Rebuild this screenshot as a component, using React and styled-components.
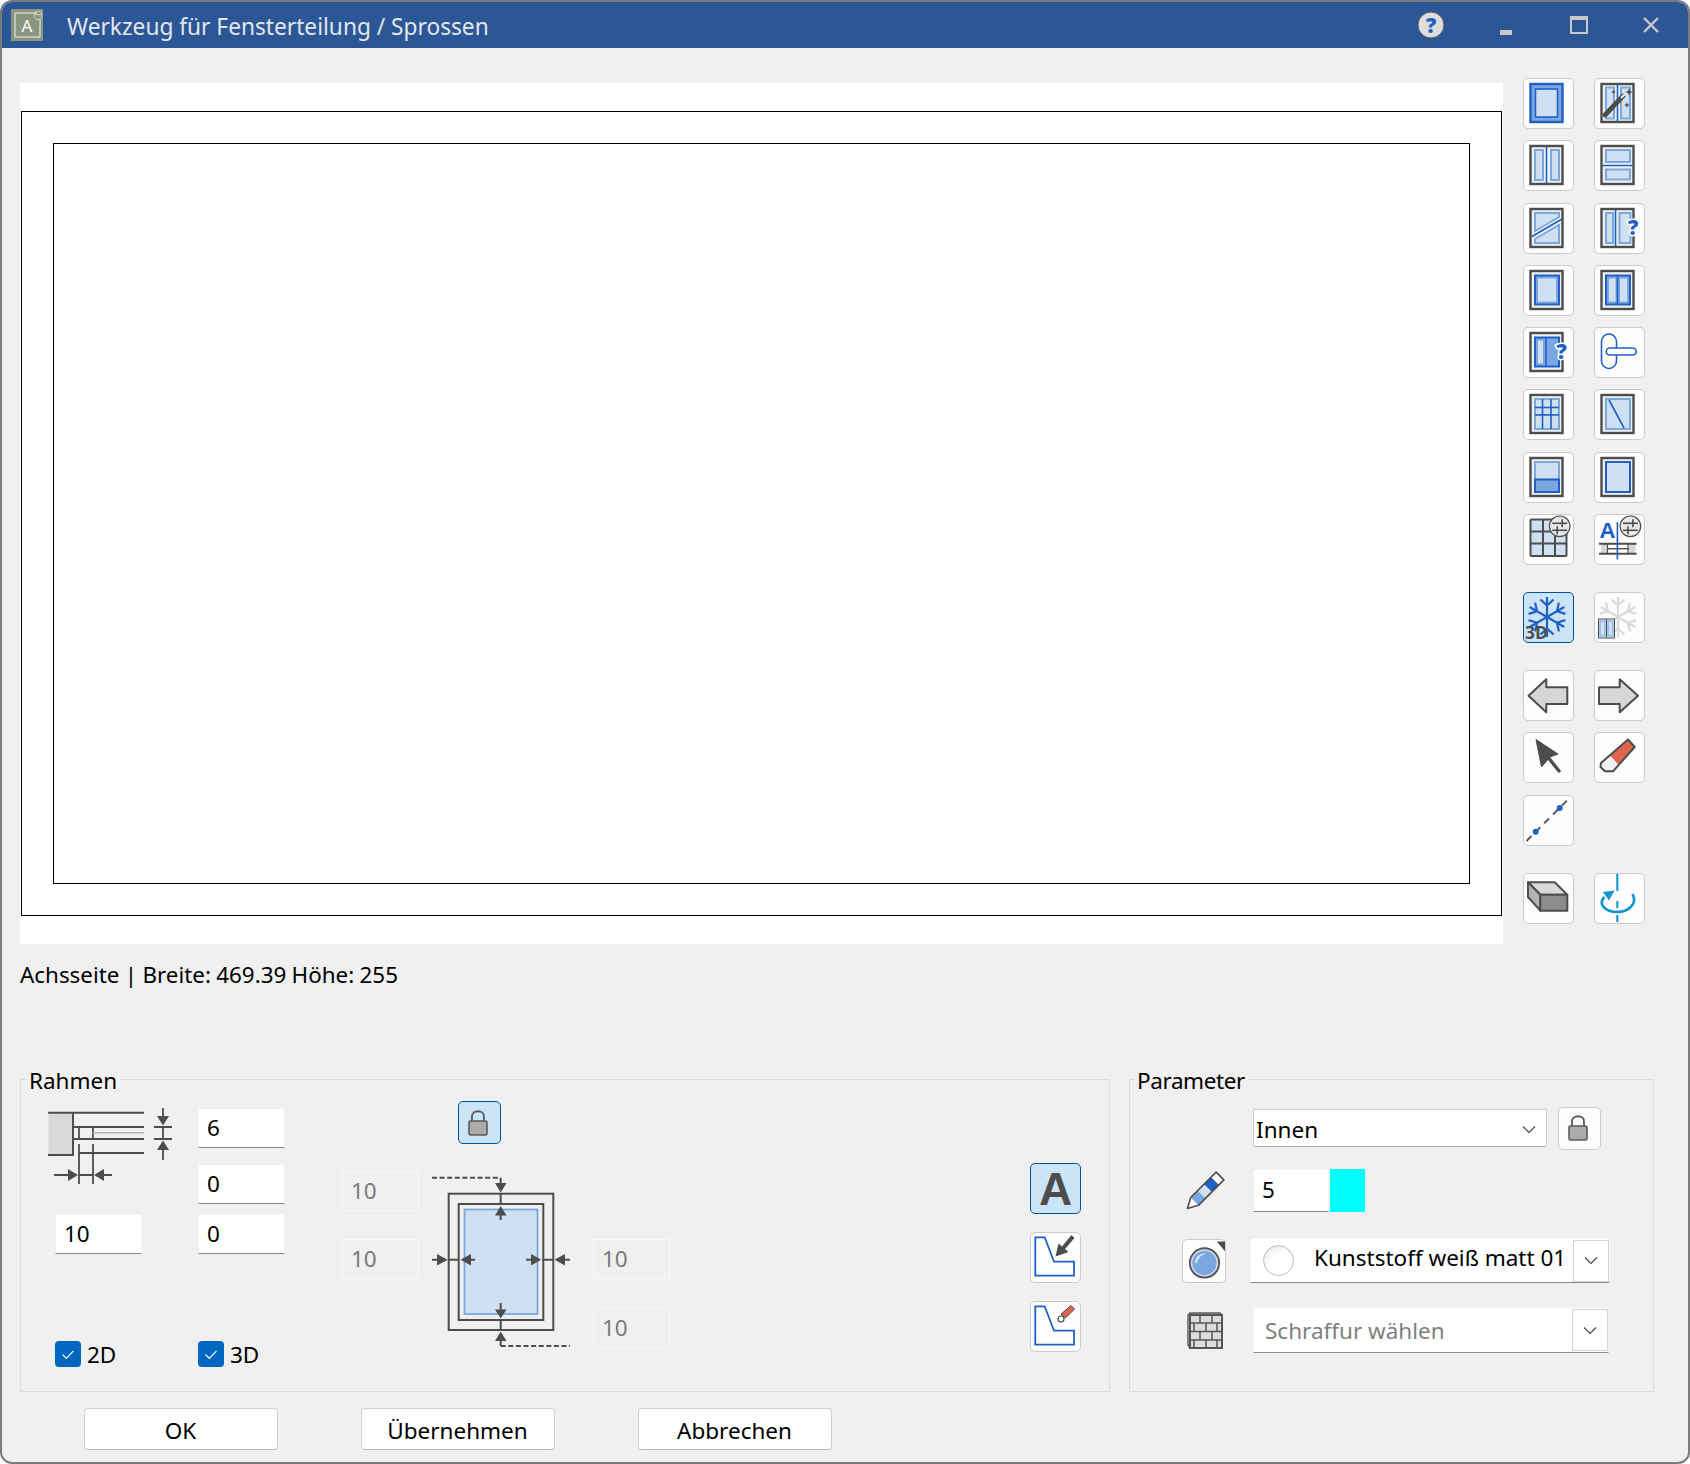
import React from "react";
import styled, { createGlobalStyle } from "styled-components";

const DARK = "#4d4d4d";
const BLUE = "#1f60c4";
const MID = "#7ba7e0";
const LIGHT = "#d0e0f3";
const PAGE = "#f0f0f0";
const FONT = `"Noto Sans", "Open Sans", "Liberation Sans", sans-serif`;

const Global = createGlobalStyle`
  html, body { margin: 0; padding: 0; background: #fff; }
  * { box-sizing: border-box; }
`;

const Window = styled.div`
  width: 1690px;
  height: 1464px;
  background: ${PAGE};
  border: 2px solid #7c7c7c;
  border-radius: 12px;
  overflow: hidden;
  font-family: ${FONT};
  color: #000;
  font-size: 22.5px;
`;

const TitleBar = styled.div`
  height: 46px;
  background: #2b5797;
  display: flex;
  align-items: center;
  padding: 0 29px 0 9px;
`;

const AppIcon = styled.div`
  width: 32px;
  height: 32px;
  background: #8b9680;
  flex: none;
  display: flex;
  align-items: center;
  justify-content: center;
`;

const Title = styled.div`
  margin-left: 24px;
  padding-top: 2px;
  color: #e3e6ea;
  font-size: 22.7px;
  flex: 1;
`;

const WinIcon = styled.svg`
  display: block;
  flex: none;
  margin-left: ${(p) => p.$ml || 0}px;
  margin-top: ${(p) => p.$mt || 0}px;
`;

const TopRow = styled.div`
  display: flex;
  padding: 30px 0 0 18px;
`;

const Preview = styled.div`
  width: 1483px;
  height: 861px;
  margin-top: 5px;
  background: #fff;
  padding: 28px 1px;
`;

const OuterRect = styled.div`
  height: 805px;
  border: 1px solid #000;
  padding: 31px;
`;

const InnerRect = styled.div`
  height: 100%;
  border: 1px solid #000;
`;

const Toolbar = styled.div`
  margin-left: 20px;
  display: flex;
  flex-direction: column;
  gap: 27px;
`;

const ToolGroup = styled.div`
  display: grid;
  grid-template-columns: 51px 51px;
  column-gap: 20px;
  row-gap: 11.3px;
`;

const ToolButton = styled.div`
  width: ${(p) => p.$size || 51}px;
  height: ${(p) => p.$size || 51}px;
  margin-left: ${(p) => p.$ml || 0}px;
  flex: none;
  border: 1px solid ${(p) => (p.$active ? "#005499" : "#cbcbcb")};
  border-radius: 5px;
  background: ${(p) => (p.$active ? "#cce4f7" : "#fdfdfd")};
  display: flex;
  align-items: center;
  justify-content: center;
  font-family: "Liberation Sans", sans-serif;
  font-weight: 700;
  font-size: 46px;
  color: ${DARK};
`;

const Status = styled.div`
  margin: 14px 0 0 18px;
  height: 34px;
  line-height: 34px;
  font-size: 22.4px;
  word-spacing: -0.5px;
`;

const GroupRow = styled.div`
  display: flex;
  gap: 19px;
  margin: 87px 0 0 18px;
`;

const GroupBox = styled.div`
  position: relative;
  width: ${(p) => p.$w}px;
  height: 313px;
  border: 1px solid #dcdcdc;
  display: ${(p) => (p.$column ? "block" : "flex")};
  align-items: flex-start;
  padding: ${(p) => p.$pad};
`;

const GroupLabel = styled.div`
  position: absolute;
  top: -16px;
  left: ${(p) => p.$left}px;
  padding: 0 3px;
  background: ${PAGE};
  line-height: 34px;
  letter-spacing: ${(p) => p.$ls || 0}px;
`;

const FrameCol = styled.div`
  width: 87px;
  margin-right: ${(p) => p.$mr || 0}px;
  margin-top: 7px;
  flex: none;
`;

const Field = styled.div`
  width: ${(p) => p.$w || 87}px;
  height: ${(p) => p.$h || 40}px;
  margin-top: ${(p) => p.$mt || 0}px;
  flex: none;
  padding: 0 0 2px 8px;
  display: flex;
  align-items: center;
  background: ${(p) => (p.$off ? PAGE : "#fff")};
  color: ${(p) => (p.$off ? "#7a7a7a" : "#000")};
  border: 1px solid ${(p) => (p.$off ? "#f9f9f9" : "#f2f2f2")};
  border-bottom: ${(p) => (p.$off ? "1px solid #f9f9f9" : "1.5px solid #8a8a8a")};
`;

const SectionIcon = styled.svg`
  display: block;
  margin-left: -8px;
  overflow: visible;
`;

const CheckRow = styled.div`
  display: flex;
  align-items: center;
  gap: 6px;
  margin-top: 87px;
  height: 26px;
  white-space: nowrap;
`;

const CheckBox = styled.div`
  width: 26px;
  height: 26px;
  flex: none;
  background: #0067c0;
  border-radius: 4px;
  display: flex;
  align-items: center;
  justify-content: center;
`;

const OffsetCol = styled.div`
  width: 77px;
  flex: none;
  margin-top: ${(p) => p.$top}px;
  margin-left: ${(p) => p.$ml || 0}px;
`;

const DiagramCol = styled.div`
  width: 138px;
  flex: none;
  margin-left: 13px;
`;

const LockSlot = styled.div`
  margin-left: 26px;
  margin-bottom: 32px;
`;

const SideCol = styled.div`
  display: flex;
  flex-direction: column;
  gap: 18px;
  margin: 62px 0 0 360px;
`;

const ParamRow = styled.div`
  display: flex;
  align-items: center;
  height: ${(p) => p.$h}px;
  margin-top: ${(p) => p.$mt || 0}px;
`;

const IconSlot = styled.div`
  width: 71px;
  flex: none;
  display: flex;
  padding-left: ${(p) => p.$pl || 0}px;
`;

const Select = styled.div`
  width: 294px;
  height: 38px;
  padding: 3px 10px 0 2px;
  background: #fff;
  border: 1px solid #cfcfcf;
  border-bottom: 1.5px solid #a8a8a8;
  border-radius: 2px;
  display: flex;
  align-items: center;
  justify-content: space-between;
`;

const Swatch = styled.div`
  width: 35px;
  height: 43px;
  margin-left: 1px;
  background: #00ffff;
`;

const Combo = styled.div`
  width: ${(p) => p.$w}px;
  height: ${(p) => p.$h}px;
  margin-left: ${(p) => p.$ml || 0}px;
  flex: none;
  display: flex;
  align-items: center;
  background: #fff;
  border: 1px solid #f4f4f4;
  border-bottom: 1.5px solid #8a8a8a;
  white-space: nowrap;
  padding-left: ${(p) => p.$pl || 0}px;
  color: ${(p) => (p.$muted ? "#7f7f7f" : "#000")};
`;

const ComboText = styled.span`
  margin-top: ${(p) => p.$mt || 0}px;
`;

const Sphere = styled.div`
  width: 31px;
  height: 31px;
  margin-right: 20px;
  flex: none;
  border-radius: 50%;
  border: 1px solid #bdbdbd;
  background: radial-gradient(circle at 60% 65%, #fff 45%, #f1f1f1 70%, #cfcfcf 100%);
`;

const DropButton = styled.div`
  width: 36px;
  height: 42px;
  margin-left: auto;
  flex: none;
  background: #fff;
  border: 1px solid #d4d4d4;
  display: flex;
  align-items: center;
  justify-content: center;
`;

const Footer = styled.div`
  display: flex;
  gap: 83px;
  margin: 16px 0 0 81.5px;
`;

const DialogButton = styled.div`
  width: 194px;
  height: 42px;
  padding-top: 2px;
  background: #fff;
  border: 1px solid #d0d0d0;
  border-bottom-color: #bcbcbc;
  border-radius: 4px;
  display: flex;
  align-items: center;
  justify-content: center;
`;

const Ic = ({ children }) => (
  <svg width="49" height="49" viewBox="1 1 49 49" style={{ display: "block" }}>
    {children}
  </svg>
);

const Frame = () => <rect x="7.5" y="6" width="32" height="38" fill={PAGE} stroke={DARK} strokeWidth="2.4" />;
const Pane = ({ x, y, w, h, stroke = MID, fill = LIGHT, sw = 2 }) => (
  <rect x={x} y={y} width={w} height={h} fill={fill} stroke={stroke} strokeWidth={sw} />
);
const Ln = ({ x1, y1, x2, y2, c = BLUE, w = 1.6, ...rest }) => (
  <line x1={x1} y1={y1} x2={x2} y2={y2} stroke={c} strokeWidth={w} {...rest} />
);
const Question = ({ x, y }) => (
  <text
    x={x}
    y={y}
    textAnchor="middle"
    fontFamily="'Open Sans', sans-serif"
    fontWeight="800"
    fontSize="21"
    fill={BLUE}
    stroke="#fff"
    strokeWidth="3"
    paintOrder="stroke"
  >
    ?
  </text>
);
const Sliders = ({ cx, cy }) => (
  <g>
    <circle cx={cx} cy={cy} r={10.3} fill="#e8e8e8" stroke={DARK} strokeWidth="1.2" />
    <Ln x1={cx - 7.5} y1={cy - 3} x2={cx + 7.5} y2={cy - 3} c={DARK} w="1.6" />
    <Ln x1={cx + 2.5} y1={cy - 7} x2={cx + 2.5} y2={cy + 1} c={DARK} w="1.6" />
    <Ln x1={cx - 7.5} y1={cy + 4} x2={cx + 7.5} y2={cy + 4} c={DARK} w="1.6" />
    <Ln x1={cx - 2.5} y1={cy} x2={cx - 2.5} y2={cy + 8} c={DARK} w="1.6" />
  </g>
);
const Flake = ({ c, w = 2.2 }) => (
  <g stroke={c} strokeWidth={w} fill="none">
    {[0, 60, 120, 180, 240, 300].map((a) => (
      <g key={a} transform={`rotate(${a} 24 25)`}>
        <path d="M24 25V5M17.5 7.5L24 13.5L30.5 7.5" />
      </g>
    ))}
  </g>
);
const Star = ({ x, y, r }) => (
  <path
    d={`M${x} ${y - r}L${x + r * 0.28} ${y - r * 0.28}L${x + r} ${y}L${x + r * 0.28} ${y + r * 0.28}L${x} ${y + r}L${x - r * 0.28} ${y + r * 0.28}L${x - r} ${y}L${x - r * 0.28} ${y - r * 0.28}Z`}
    fill={DARK}
  />
);

const tools = [
  <Ic key="a1">
    <rect x="7.5" y="6" width="32" height="38" fill={MID} stroke={BLUE} strokeWidth="2.4" />
    <rect x="12.5" y="11" width="22" height="28" fill={LIGHT} stroke={BLUE} strokeWidth="1.6" />
  </Ic>,
  <Ic key="a2">
    <Frame />
    <Pane x="12" y="9.5" w="8" h="31" />
    <Pane x="27" y="9.5" w="9" h="31" />
    <Ln x1="23.5" y1="6" x2="23.5" y2="44" />
    <Ln x1="11" y1="37" x2="29" y2="18" c={DARK} w="4.8" strokeLinecap="round" />
    <Ln x1="27" y1="20" x2="31" y2="16" c="#eee" w="2.2" />
    <Star x={35} y={14} r={3.8} />
    <Star x={33} y={27} r={3} />
    <Star x={19.5} y={14} r={2.4} />
  </Ic>,
  <Ic key="b1">
    <Frame />
    <Pane x="12" y="10" w="8" h="30" />
    <Pane x="28" y="10" w="8" h="30" />
    <Ln x1="23.5" y1="6" x2="23.5" y2="44" />
  </Ic>,
  <Ic key="b2">
    <Frame />
    <Pane x="12" y="10" w="24" h="12" />
    <Pane x="12" y="29.5" w="24" h="10" />
    <Ln x1="7.5" y1="25.5" x2="39.5" y2="25.5" />
  </Ic>,
  <Ic key="c1">
    <Frame />
    <path d="M12 10H36V14L12 28Z" fill={LIGHT} stroke={MID} strokeWidth="2" />
    <path d="M36 22V40H12V36Z" fill={LIGHT} stroke={MID} strokeWidth="2" />
    <Ln x1="9" y1="33.5" x2="39" y2="16" />
  </Ic>,
  <Ic key="c2">
    <Frame />
    <Pane x="12" y="10" w="7" h="30" />
    <Pane x="25.5" y="10" w="11" h="30" />
    <Ln x1="21.5" y1="6" x2="21.5" y2="44" />
    <Question x="39" y="32" />
  </Ic>,
  <Ic key="d1">
    <Frame />
    <Pane x="12" y="10.5" w="24" h="29" stroke={BLUE} fill={MID} />
    <Pane x="15" y="13.5" w="18" h="23" stroke={LIGHT} fill={LIGHT} sw="0" />
  </Ic>,
  <Ic key="d2">
    <Frame />
    <Pane x="12" y="10.5" w="24" h="29" stroke={BLUE} fill={MID} />
    <Pane x="15" y="13.5" w="6.5" h="23" stroke={LIGHT} fill={LIGHT} sw="0" />
    <Pane x="26" y="13.5" w="7" h="23" stroke={LIGHT} fill={LIGHT} sw="0" />
    <Ln x1="23.5" y1="10" x2="23.5" y2="40" />
  </Ic>,
  <Ic key="e1">
    <Frame />
    <Pane x="12" y="10.5" w="24" h="29" stroke={BLUE} fill={MID} />
    <Pane x="15" y="13.5" w="5" h="23" stroke={LIGHT} fill={LIGHT} sw="0" />
    <Ln x1="23" y1="10" x2="23" y2="40" />
    <Question x="38.5" y="32" />
  </Ic>,
  <Ic key="e2">
    <rect x="7.5" y="7" width="15" height="34.5" rx="7.5" fill="#fff" stroke={BLUE} strokeWidth="1.6" />
    <rect x="12.2" y="21" width="30" height="7" rx="3.5" fill="#fff" stroke={BLUE} strokeWidth="1.6" />
  </Ic>,
  <Ic key="f1">
    <Frame />
    <Pane x="12" y="10" w="24" h="30" />
    <Ln x1="19.5" y1="10" x2="19.5" y2="40" />
    <Ln x1="28" y1="10" x2="28" y2="40" />
    <Ln x1="12" y1="18.5" x2="36" y2="18.5" />
    <Ln x1="12" y1="26" x2="36" y2="26" />
  </Ic>,
  <Ic key="f2">
    <Frame />
    <Pane x="12" y="10" w="24" h="30" />
    <Ln x1="15" y1="11" x2="30" y2="39" />
  </Ic>,
  <Ic key="g1">
    <Frame />
    <Pane x="12" y="10" w="24" h="30" />
    <Pane x="12" y="27.5" w="24" h="12.5" stroke={BLUE} fill={MID} />
  </Ic>,
  <Ic key="g2">
    <Frame />
    <Pane x="12" y="10" w="24" h="30" stroke={BLUE} />
  </Ic>,
  <Ic key="h1">
    <rect x="7.5" y="5.5" width="36" height="36.5" rx="1" fill={LIGHT} stroke={DARK} strokeWidth="2" />
    <Ln x1="20" y1="5.5" x2="20" y2="42" c={DARK} w="2" />
    <Ln x1="32" y1="5.5" x2="32" y2="42" c={DARK} w="2" />
    <Ln x1="7.5" y1="17.5" x2="43.5" y2="17.5" c={DARK} w="2" />
    <Ln x1="7.5" y1="29.5" x2="43.5" y2="29.5" c={DARK} w="2" />
    <Sliders cx={36.7} cy={12.3} />
  </Ic>,
  <Ic key="h2">
    <text x="13.5" y="24" textAnchor="middle" fontFamily="'Liberation Sans', sans-serif" fontWeight="700" fontSize="22" fill={BLUE}>
      A
    </text>
    <rect x="7" y="30" width="6" height="10" fill="#d6d6d6" />
    <rect x="35" y="30" width="6.5" height="10" fill="#d6d6d6" />
    <Ln x1="5" y1="29.7" x2="42.5" y2="29.7" c={DARK} w="2" />
    <Ln x1="5" y1="39.7" x2="42.5" y2="39.7" c={DARK} w="2" />
    <Ln x1="13" y1="34.7" x2="35" y2="34.7" c={DARK} w="1.4" />
    <Ln x1="13.5" y1="30" x2="13.5" y2="39.5" c={DARK} w="1.2" />
    <Ln x1="34" y1="30" x2="34" y2="39.5" c={DARK} w="1.2" />
    <Ln x1="23.4" y1="8" x2="23.4" y2="45.5" />
    <Sliders cx={36.4} cy={12.3} />
  </Ic>,
];

const ColdIcons = [
  <ToolButton key="s1" $active>
    <Ic>
      <Flake c={BLUE} />
      <text x="2" y="47" fontFamily="'Open Sans', sans-serif" fontWeight="700" fontSize="17.5" fill={DARK}>
        3D
      </text>
    </Ic>
  </ToolButton>,
  <ToolButton key="s2">
    <Ic>
      <Flake c="#d9d9d9" />
      <rect x="4.5" y="27" width="16" height="19" fill="#eef3fa" stroke={DARK} strokeWidth="1" />
      <rect x="6" y="29" width="5" height="15" fill={LIGHT} stroke={MID} strokeWidth="1.2" />
      <rect x="14" y="29" width="5" height="15" fill={LIGHT} stroke={MID} strokeWidth="1.2" />
      <Ln x1="12.5" y1="27" x2="12.5" y2="46" c={DARK} w="1" />
    </Ic>
  </ToolButton>,
];

const EditIcons = [
  <ToolButton key="l">
    <Ic>
      <path d="M5.5 25.7L23.3 9.3V17.3H44.3V34H23.3V42.3Z" fill="#d6d6d6" stroke={DARK} strokeWidth="2" strokeLinejoin="round" />
    </Ic>
  </ToolButton>,
  <ToolButton key="r">
    <Ic>
      <path d="M44 25.7L25.7 9.3V17.3H5V34H25.7V42.3Z" fill="#d6d6d6" stroke={DARK} strokeWidth="2" strokeLinejoin="round" />
    </Ic>
  </ToolButton>,
  <ToolButton key="c">
    <Ic>
      <path d="M13 7.5L35 22L27 25L18.5 35Z" fill={DARK} stroke={DARK} strokeWidth="1" strokeLinejoin="round" />
      <Ln x1="24" y1="24" x2="36" y2="39" c={DARK} w="3.4" strokeLinecap="round" />
    </Ic>
  </ToolButton>,
  <ToolButton key="e">
    <Ic>
      <path d="M34 7.5L40.7 15L24.5 33L15.5 23Z" fill="#e0654f" />
      <path d="M15.5 23L24.5 33L19 39.3H11L6.5 35L7 31Z" fill="#f1f1f1" />
      <path d="M34 7.5L40.7 15L19 39.3H11L6.5 35L7 31Z" fill="none" stroke={DARK} strokeWidth="2" strokeLinejoin="round" />
    </Ic>
  </ToolButton>,
  <ToolButton key="d">
    <Ic>
      <Ln x1="3.5" y1="46" x2="46" y2="3.5" c="#5a5a5a" w="2" strokeDasharray="7 5.5" />
      <circle cx="36.7" cy="13" r="3" fill={BLUE} />
      <circle cx="12.7" cy="36.7" r="3" fill={BLUE} />
    </Ic>
  </ToolButton>,
  <span key="gap" />,
];

const ViewIcons = [
  <ToolButton key="v">
    <Ic>
      <path d="M5 9.3H31.7L44.3 21.7H17.3Z" fill="#d9d9d9" stroke={DARK} strokeWidth="2" strokeLinejoin="round" />
      <path d="M5 9.3L17.3 21.7V37.7L5 24Z" fill="#b3b3b3" stroke={DARK} strokeWidth="2" strokeLinejoin="round" />
      <rect x="17.3" y="21.7" width="27" height="16" fill="#8c8c8c" stroke={DARK} strokeWidth="2" strokeLinejoin="round" />
    </Ic>
  </ToolButton>,
  <ToolButton key="rot">
    <Ic>
      <path d="M23.3 1V18M23.3 28V35M23.3 42V49" stroke="#0f94d2" strokeWidth="2" fill="none" />
      <path d="M38.5 21C44 31 34 39 23.3 39C11 39 3.5 31 10.5 24" stroke="#0f94d2" strokeWidth="2.6" fill="none" />
      <path d="M9 19L20.5 17.5L15 27.5Z" fill="#0f94d2" />
    </Ic>
  </ToolButton>,
];

const LockIcon = () => (
  <svg width="26" height="30" viewBox="0 0 26 30" style={{ display: "block", marginRight: 3 }}>
    <path d="M7 13V8.5C7 1.5 19 1.5 19 8.5V13" fill="none" stroke="#5a5a5a" strokeWidth="1.8" />
    <rect x="4" y="13" width="18" height="14" rx="1.5" fill="#ababab" stroke="#5a5a5a" strokeWidth="1.6" />
  </svg>
);

const Chevron = () => (
  <svg width="14" height="9" viewBox="0 0 14 9" style={{ display: "block" }}>
    <path d="M1 1.5L7 7.5L13 1.5" fill="none" stroke="#444" strokeWidth="1.1" />
  </svg>
);

const CheckMark = () => (
  <svg width="14" height="11" viewBox="0 0 14 11" style={{ display: "block" }}>
    <path d="M1.5 5.5L5.3 9.3L12.5 1.8" fill="none" stroke="#fff" strokeWidth="1.2" />
  </svg>
);

const CornerShape = () => (
  <path d="M5.3 5.3H14.7L24 29.7H44V43.7H5.3Z" fill="#fff" stroke={BLUE} strokeWidth="1.8" />
);

const Arrow = ({ d }) => <path d={d} fill={DARK} />;

const SectionDrawing = () => (
  <SectionIcon width="125" height="76" viewBox="47 48 125 76">
    <rect x="48.5" y="52.7" width="24" height="42.3" fill="#d9d9d9" />
    <g stroke={DARK} strokeWidth="1.8" fill="none">
      <path d="M48 52.7H144M48 95H74M73 52.7V95" strokeWidth="2" />
      <path d="M73 67H144M73 79H144M79 93H144" />
      <path d="M79 67V79M79 84V124M93 67V79M93 84V124M82 93H90" />
      <path d="M54 115H70M79 115H93M102 115H112" />
      <path d="M163 48V56M154 67H172M154 79H172M163 67V79M163 89V100" />
    </g>
    <Ln x1="93" y1="72.7" x2="144" y2="72.7" c="#b3b3b3" w="1.6" />
    <Arrow d="M68 109L78 115L68 121Z" />
    <Arrow d="M104 109L94 115L104 121Z" />
    <Arrow d="M157 56H169L163 65.5Z" />
    <Arrow d="M157 90H169L163 80.5Z" />
  </SectionIcon>
);

const MarginDrawing = () => (
  <svg width="138" height="172" viewBox="112 86 138 172" style={{ display: "block" }}>
    <rect x="128.7" y="103.7" width="104.6" height="136.3" fill={PAGE} stroke={DARK} strokeWidth="2" />
    <rect x="138.7" y="114" width="84.6" height="116" fill={PAGE} stroke={DARK} strokeWidth="2" />
    <rect x="144.5" y="119.5" width="73" height="104.5" fill={LIGHT} stroke={MID} strokeWidth="1.8" />
    <g stroke={DARK} strokeWidth="2" fill="none">
      <path d="M112 87.7H180.7" strokeDasharray="5 2.6" />
      <path d="M180.7 88V95M180.7 103V114M180.7 124V130" />
      <path d="M112 169.7H120M128 169.7H139M148 169.7H155" />
      <path d="M206 169.7H213M222 169.7H233M243 169.7H250" />
      <path d="M180.7 213V221M180.7 230V241M180.7 250V256" />
      <path d="M180.7 256H250" strokeDasharray="5 2.6" />
    </g>
    <Arrow d="M175 93H186.5L180.7 102.5Z" />
    <Arrow d="M175 125.5H186.5L180.7 116Z" />
    <Arrow d="M175 219.5H186.5L180.7 228.5Z" />
    <Arrow d="M175 251H186.5L180.7 241.5Z" />
    <Arrow d="M117 164V175.5L127.7 169.7Z" />
    <Arrow d="M151 164V175.5L140.5 169.7Z" />
    <Arrow d="M211 164V175.5L221.3 169.7Z" />
    <Arrow d="M245 164V175.5L234.5 169.7Z" />
  </svg>
);

const PencilIcon = () => (
  <svg width="39" height="39" viewBox="0 0 39 39" style={{ display: "block" }}>
    <g transform="translate(1.5 37.5) rotate(45)">
      <path d="M0 0L-5 -10H5Z" fill="#fff" />
      <rect x="-5.5" y="-20" width="11" height="10" fill={MID} />
      <rect x="-5.5" y="-29" width="11" height="9" fill={LIGHT} />
      <rect x="-5.5" y="-39" width="11" height="10" fill={BLUE} />
      <rect x="-5.5" y="-46" width="11" height="7" fill="#fff" />
      <path d="M0 0L-5.5 -10V-46H5.5V-10Z" fill="none" stroke={DARK} strokeWidth="1.6" strokeLinejoin="round" />
    </g>
  </svg>
);

const HatchIcon = () => (
  <svg width="36" height="37" viewBox="0 0 36 37" style={{ display: "block" }}>
    <rect x="3" y="3" width="32" height="33" fill="#dcdcdc" stroke="#555" strokeWidth="2" />
    <path d="M1 3L3 1H33L35 3M1 3V33L3 36" fill="none" stroke="#555" strokeWidth="1.4" />
    <path
      d="M3 11H35M3 19.5H35M3 28H35M13 3V11M25 3V11M7 11V19.5M19 11V19.5M30 11V19.5M13 19.5V28M25 19.5V28M7 28V36M19 28V36M30 28V36"
      fill="none"
      stroke="#555"
      strokeWidth="1.5"
    />
  </svg>
);

const MaterialIcon = () => (
  <svg width="43" height="43" viewBox="1 1 43 43" style={{ display: "block" }}>
    <circle cx="23" cy="25" r="15" fill={LIGHT} stroke="#555" strokeWidth="2" />
    <circle cx="23" cy="25" r="12.5" fill={MID} />
    <path d="M13.5 25C13.5 18 19 14.5 25 15C20 16.5 16 20 15.5 25Z" fill="#fff" opacity="0.7" />
    <path d="M35.5 3H44V13Z" fill={DARK} />
  </svg>
);

export default function App() {
  return (
    <>
      <Global />
      <Window>
        <TitleBar>
          <AppIcon>
            <svg width="32" height="32" viewBox="0 0 32 32" style={{ display: "block" }}>
              <path d="M26 4H4V28H29V10" fill="none" stroke="#f2f2f2" strokeWidth="1" />
              <text x="16" y="23" textAnchor="middle" fontFamily="'Noto Sans', sans-serif" fontSize="17" fill="#fff">
                A
              </text>
              <ellipse cx="27" cy="4" rx="3.5" ry="1.8" fill="none" stroke="#d8dcd2" strokeWidth="0.8" />
              <path d="M23.5 4V8.5C23.5 11 30.5 11 30.5 8.5V4" fill="none" stroke="#d8dcd2" strokeWidth="0.8" />
            </svg>
          </AppIcon>
          <Title>Werkzeug für Fensterteilung / Sprossen</Title>
          <WinIcon width="28" height="28" viewBox="0 0 28 28">
            <circle cx="14" cy="14" r="13" fill="#dedede" stroke="#5a5a5a" strokeWidth="1" />
            <text x="14" y="21.5" textAnchor="middle" fontFamily="'Open Sans', sans-serif" fontWeight="800" fontSize="21" fill={BLUE}>
              ?
            </text>
          </WinIcon>
          <WinIcon $ml={55} $mt={15} width="12" height="12" viewBox="0 0 12 12">
            <rect x="0" y="3" width="12" height="5" fill="#c9c9c9" />
          </WinIcon>
          <WinIcon $ml={58} width="18" height="18" viewBox="0 0 18 18">
            <path d="M1 1H17V17H1Z" fill="none" stroke="#c9c9c9" strokeWidth="2" />
            <rect x="1" y="1" width="16" height="3" fill="#c9c9c9" />
          </WinIcon>
          <WinIcon $ml={55} width="16" height="16" viewBox="0 0 16 16">
            <path d="M1 1L15 15M15 1L1 15" stroke="#c9c9c9" strokeWidth="2.4" />
          </WinIcon>
        </TitleBar>

        <TopRow>
          <Preview>
            <OuterRect>
              <InnerRect />
            </OuterRect>
          </Preview>
          <Toolbar>
            <ToolGroup>
              {tools.map((icon) => (
                <ToolButton key={icon.key}>{icon}</ToolButton>
              ))}
            </ToolGroup>
            <ToolGroup>{ColdIcons}</ToolGroup>
            <ToolGroup>{EditIcons}</ToolGroup>
            <ToolGroup>{ViewIcons}</ToolGroup>
          </Toolbar>
        </TopRow>

        <Status>Achsseite | Breite: 469.39 Höhe: 255</Status>

        <GroupRow>
          <GroupBox $w={1090} $pad="21px 0 0 34px">
            <GroupLabel $left={5}>Rahmen</GroupLabel>
            <FrameCol $mr={56}>
              <SectionDrawing />
              <Field $mt={30}>10</Field>
              <CheckRow>
                <CheckBox>
                  <CheckMark />
                </CheckBox>
                2D
              </CheckRow>
            </FrameCol>
            <FrameCol>
              <Field>6</Field>
              <Field $mt={16}>0</Field>
              <Field $mt={10}>0</Field>
              <CheckRow>
                <CheckBox>
                  <CheckMark />
                </CheckBox>
                3D
              </CheckRow>
            </FrameCol>
            <OffsetCol $top={70} $ml={57}>
              <Field $w={77} $off>
                10
              </Field>
              <Field $w={77} $mt={28} $off>
                10
              </Field>
            </OffsetCol>
            <DiagramCol>
              <LockSlot>
                <ToolButton $size={43} $active>
                  <LockIcon />
                </ToolButton>
              </LockSlot>
              <MarginDrawing />
            </DiagramCol>
            <OffsetCol $top={138} $ml={23}>
              <Field $w={77} $off>
                10
              </Field>
              <Field $w={77} $mt={29} $off>
                10
              </Field>
            </OffsetCol>
            <SideCol>
              <ToolButton $active>A</ToolButton>
              <ToolButton>
                <Ic>
                  <CornerShape />
                  <path d="M41.5 3L44.5 6L35 17L38.5 20L25.5 24.5L28.5 11.5L32 14.5Z" fill={DARK} />
                </Ic>
              </ToolButton>
              <ToolButton>
                <Ic>
                  <CornerShape />
                  <path d="M41 4.5L44.5 8L35.5 17L31 13Z" fill="#e0654f" stroke={DARK} strokeWidth="1" />
                  <circle cx="31" cy="18" r="3" fill="#fff" stroke={DARK} strokeWidth="1.2" />
                </Ic>
              </ToolButton>
            </SideCol>
          </GroupBox>

          <GroupBox $w={525} $column $pad="27px 0 0 52px">
            <GroupLabel $left={4} $ls={-0.4}>
              Parameter
            </GroupLabel>
            <ParamRow $h={42}>
              <IconSlot />
              <Select>
                Innen
                <Chevron />
              </Select>
              <ToolButton $size={43} $ml={11}>
                <LockIcon />
              </ToolButton>
            </ParamRow>
            <ParamRow $h={43} $mt={20}>
              <IconSlot $pl={4}>
                <PencilIcon />
              </IconSlot>
              <Field $w={76} $h={43}>
                5
              </Field>
              <Swatch />
            </ParamRow>
            <ParamRow $h={45} $mt={26}>
              <IconSlot>
                <ToolButton $size={44}>
                  <MaterialIcon />
                </ToolButton>
              </IconSlot>
              <Combo $w={360} $h={45} $ml={-3} $pl={12}>
                <Sphere />
                <ComboText $mt={-6}>Kunststoff weiß matt 01</ComboText>
                <DropButton>
                  <Chevron />
                </DropButton>
              </Combo>
            </ParamRow>
            <ParamRow $h={46} $mt={24}>
              <IconSlot $pl={5}>
                <HatchIcon />
              </IconSlot>
              <Combo $w={356} $h={46} $pl={11} $muted>
                <ComboText>Schraffur wählen</ComboText>
                <DropButton>
                  <Chevron />
                </DropButton>
              </Combo>
            </ParamRow>
          </GroupBox>
        </GroupRow>

        <Footer>
          <DialogButton>OK</DialogButton>
          <DialogButton>Übernehmen</DialogButton>
          <DialogButton>Abbrechen</DialogButton>
        </Footer>
      </Window>
    </>
  );
}
